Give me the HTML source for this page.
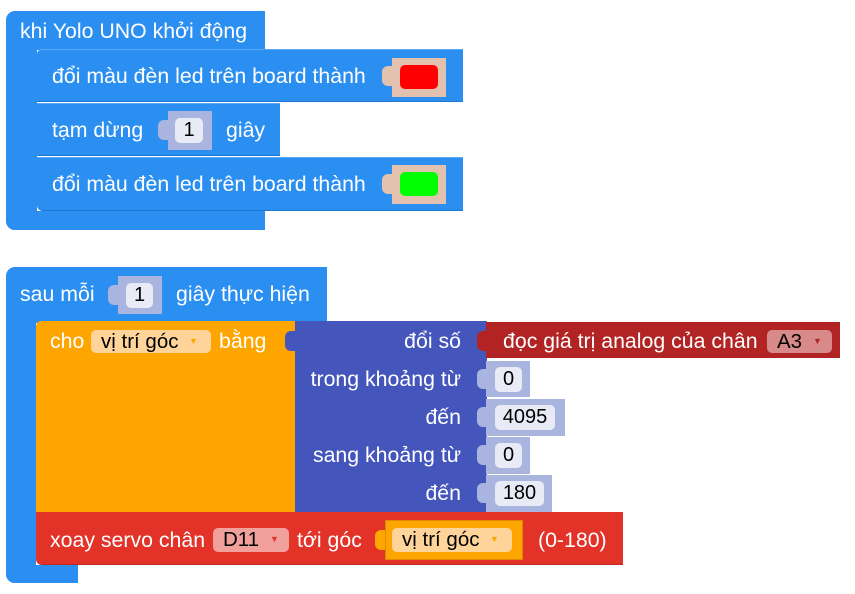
<!DOCTYPE html>
<html><head><meta charset="utf-8"><style>
body{margin:0;width:855px;height:594px;background:#fff;position:relative;overflow:hidden;font-family:"Liberation Sans",Arial,sans-serif;font-size:21.3px;color:#fff}
div{position:absolute;box-sizing:border-box}
.t{white-space:nowrap;line-height:22px}
.b{background:#2b8ff2}
.fld{background:#e8eaf6;color:#000;border-radius:5px;text-align:center;line-height:25px;font-size:20px}
.num{background:#a9b5df}
.tab{width:10px;height:20px;border-radius:6px 0 0 6px}
.dd{border-radius:5px;color:#000;padding-left:10px;line-height:23px;font-size:20.5px;white-space:nowrap}
.ar{font-size:9px;position:absolute;top:0}
</style></head><body>
<!-- top group -->
<div class="b" style="left:6px;top:11px;width:259px;height:39px;border-radius:9px 0 0 0"></div>
<div class="b" style="left:6px;top:40px;width:31px;height:190px;border-radius:0 0 0 9px"></div>
<div class="b" style="left:6px;top:211px;width:259px;height:19px;border-radius:0 0 0 9px"></div>
<div class="t" style="left:20px;top:20px">khi Yolo UNO khởi động</div>
<div class="b" style="left:37px;top:49px;width:426px;height:53px;border-radius:5px 0 0 0;border-top:1px solid #5aa8f5;border-bottom:1px solid #1f78d0"></div>
<div class="t" style="left:52px;top:65px">đổi màu đèn led trên board thành</div>
<div class="tab" style="left:382px;top:66px;background:#e2c2ae"></div>
<div style="left:392px;top:58px;width:54px;height:39px;background:#e2c2ae"></div>
<div style="left:400px;top:65px;width:38px;height:24px;background:#ff0000;border-radius:5px"></div>
<div class="b" style="left:37px;top:103px;width:243px;height:53px;border-top:1px solid #5aa8f5;border-bottom:1px solid #1f78d0"></div>
<div class="t" style="left:52px;top:119px">tạm dừng</div>
<div class="tab num" style="left:158px;top:120px"></div>
<div class="num" style="left:168px;top:111px;width:44px;height:39px"></div>
<div class="fld" style="left:175px;top:118px;width:28px;height:25px">1</div>
<div class="t" style="left:226px;top:119px">giây</div>
<div class="b" style="left:37px;top:157px;width:426px;height:54px;border-top:1px solid #5aa8f5;border-bottom:1px solid #1f78d0;border-radius:0 0 0 6px"></div>
<div class="t" style="left:52px;top:173px">đổi màu đèn led trên board thành</div>
<div class="tab" style="left:382px;top:174px;background:#e2c2ae"></div>
<div style="left:392px;top:165px;width:54px;height:39px;background:#e2c2ae"></div>
<div style="left:400px;top:172px;width:38px;height:24px;background:#00ff00;border-radius:5px"></div>

<!-- bottom group -->
<div class="b" style="left:6px;top:267px;width:321px;height:56px;border-radius:9px 0 0 0"></div>
<div class="b" style="left:6px;top:300px;width:30px;height:283px;border-radius:0 0 0 9px"></div>
<div class="b" style="left:6px;top:565px;width:72px;height:18px;border-radius:0 0 0 9px"></div>
<div class="t" style="left:20px;top:283px">sau mỗi</div>
<div class="tab num" style="left:108px;top:285px"></div>
<div class="num" style="left:118px;top:276px;width:44px;height:38px"></div>
<div class="fld" style="left:126px;top:283px;width:27px;height:25px">1</div>
<div class="t" style="left:176px;top:283px">giây thực hiện</div>

<div style="left:36px;top:321px;width:260px;height:192px;background:#ffa500;border-radius:5px 0 0 0"></div>
<div class="t" style="left:50px;top:330px">cho</div>
<div class="dd" style="left:91px;top:330px;width:120px;height:23px;background:#ffd49a">vị trí góc<span class="ar" style="left:98px;color:#ffa500">▼</span></div>
<div class="t" style="left:219px;top:330px">bằng</div>

<div style="left:295px;top:321px;width:192px;height:192px;background:#4455bb"></div>
<div class="tab" style="left:285px;top:331px;background:#4455bb"></div>
<div class="t" style="left:295px;top:330px;width:166px;text-align:right">đổi số</div>
<div class="t" style="left:295px;top:368px;width:166px;text-align:right">trong khoảng từ</div>
<div class="t" style="left:295px;top:406px;width:166px;text-align:right">đến</div>
<div class="t" style="left:295px;top:444px;width:166px;text-align:right">sang khoảng từ</div>
<div class="t" style="left:295px;top:482px;width:166px;text-align:right">đến</div>

<div style="left:486px;top:322px;width:354px;height:36px;background:#b22424"></div>
<div class="tab" style="left:477px;top:331px;background:#b22424"></div>
<div class="t" style="left:503px;top:330px">đọc giá trị analog của chân</div>
<div class="dd" style="left:767px;top:330px;width:65px;height:23px;background:#d88a8a">A3<span class="ar" style="left:46px;color:#b22424">▼</span></div>

<div class="tab num" style="left:477px;top:369px"></div>
<div class="num" style="left:486px;top:361px;width:44px;height:36px"></div>
<div class="fld" style="left:495px;top:367px;width:27px;height:25px">0</div>
<div class="tab num" style="left:477px;top:407px"></div>
<div class="num" style="left:486px;top:399px;width:79px;height:37px"></div>
<div class="fld" style="left:495px;top:405px;width:60px;height:25px">4095</div>
<div class="tab num" style="left:477px;top:445px"></div>
<div class="num" style="left:486px;top:437px;width:44px;height:37px"></div>
<div class="fld" style="left:495px;top:443px;width:27px;height:25px">0</div>
<div class="tab num" style="left:477px;top:483px"></div>
<div class="num" style="left:486px;top:475px;width:66px;height:37px"></div>
<div class="fld" style="left:495px;top:481px;width:49px;height:25px">180</div>

<div style="left:36px;top:512px;width:587px;height:53px;background:#e33228;border-radius:0 0 0 6px;border-bottom:1px solid #c02820"></div>
<div class="t" style="left:50px;top:529px">xoay servo chân</div>
<div class="dd" style="left:213px;top:528px;width:76px;height:24px;background:#f2a09c">D11<span class="ar" style="left:57px;color:#e33228">▼</span></div>
<div class="t" style="left:297px;top:529px">tới góc</div>
<div class="tab" style="left:375px;top:530px;background:#ffa500"></div>
<div style="left:385px;top:520px;width:138px;height:40px;background:#ffa500;border:1px solid #e08a00"></div>
<div class="dd" style="left:392px;top:528px;width:120px;height:24px;background:#ffd49a">vị trí góc<span class="ar" style="left:98px;color:#ffa500">▼</span></div>
<div class="t" style="left:538px;top:529px">(0-180)</div>
</body></html>
